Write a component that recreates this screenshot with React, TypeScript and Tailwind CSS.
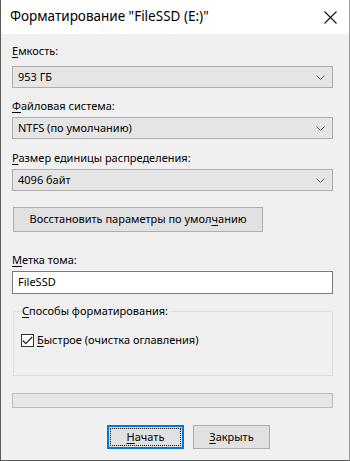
import React from "react";

const font = { fontFamily: '"Noto Sans", "Liberation Sans", sans-serif' };

function U({ children }: { children: React.ReactNode }) {
  return <span className="underline underline-offset-2 decoration-1">{children}</span>;
}

function Chevron() {
  return (
    <svg width="9" height="5" viewBox="0 0 9 5" className="shrink-0">
      <path d="M0.5 0.5 L4.5 4.5 L8.5 0.5" fill="none" stroke="#606060" strokeWidth="1" />
    </svg>
  );
}

function Combo({ value }: { value: string }) {
  return (
    <div className="h-[22px] w-[321px] bg-[#e5e5e5] border border-[#adadad] flex items-center justify-between pl-[5px] pr-[7px] text-[11px] text-black">
      <span>{value}</span>
      <Chevron />
    </div>
  );
}

function Label({ children, className = "" }: { children: React.ReactNode; className?: string }) {
  return <div className={"h-[16px] leading-[16px] text-[11px] text-black " + className}>{children}</div>;
}

export default function App() {
  return (
    <div className="w-[350px] h-[461px] bg-[#f0f0f0] border-l border-b border-r border-l-[#5a5a5a] border-b-[#5a5a5a] border-r-[#9a9a9a] flex flex-col box-border" style={font}>
      <div className="h-[34px] bg-white flex items-center justify-between pl-[9px] pr-[12px] shrink-0">
        <span className="text-[13.5px] text-black leading-none">Форматирование "FileSSD (E:)"</span>
        <svg width="13" height="13" viewBox="0 0 13 13">
          <path d="M0.5 0.5 L12.5 12.5 M12.5 0.5 L0.5 12.5" stroke="#111" strokeWidth="1.1" fill="none" />
        </svg>
      </div>
      <div className="flex flex-col pl-[11px]">
        <Label className="mt-[9px]"><U>Е</U>мкость:</Label>
        <div className="mt-[7px]"><Combo value="953 ГБ" /></div>
        <Label className="mt-[10px]"><U>Ф</U>айловая система:</Label>
        <div className="mt-[3px]"><Combo value="NTFS (по умолчанию)" /></div>
        <Label className="mt-[11px]"><U>Р</U>азмер единицы распределения:</Label>
        <div className="mt-[3px]"><Combo value="4096 байт" /></div>
        <button className="mt-[16px] ml-[1px] h-[25px] w-[250px] bg-[#e1e1e1] border border-[#adadad] text-[11px] text-black flex items-center justify-center">
          <span>Восстановить параметры по умол<U>ч</U>анию</span>
        </button>
        <Label className="mt-[20px]"><U>М</U>етка тома:</Label>
        <div className="mt-[3px] h-[23px] w-[321px] bg-white border border-[#7a7a7a] flex items-center pl-[5px] text-[11px] text-black">
          FileSSD
        </div>
        <div className="mt-[17px] ml-[1px] w-[320px] h-[65px] border border-[#dcdcdc] relative">
          <div className="absolute left-[7px] top-[-9px] bg-[#f0f0f0] px-[1px] h-[16px] leading-[16px] text-[11px] text-black">
            <U>С</U>пособы форматирования:
          </div>
          <div className="flex items-center mt-[20px] ml-[7px] gap-[3px]">
            <div className="w-[13px] h-[13px] bg-white border border-[#333] flex items-center justify-center">
              <svg width="11" height="9" viewBox="0 0 11 9">
                <path d="M0.8 4.5 L3.8 7.6 L10.2 1" fill="none" stroke="#222" strokeWidth="1.2" />
              </svg>
            </div>
            <span className="text-[11px] text-black leading-[16px]"><U>Б</U>ыстрое (очистка оглавления)</span>
          </div>
        </div>
        <div className="mt-[17px] w-[321px] h-[15px] bg-[#e6e6e6] border border-[#bcbcbc]" />
        <div className="mt-[17px] flex gap-[9px] ml-[95px]">
          <button className="w-[77px] h-[24px] bg-[#e1e1e1] border-2 border-[#0078d7] p-[1px] text-[11px] text-black">
            <div className="w-full h-full border border-dotted border-black flex items-center justify-center">
              <span><U>Н</U>ачать</span>
            </div>
          </button>
          <button className="w-[77px] h-[24px] bg-[#e1e1e1] border border-[#adadad] text-[11px] text-black flex items-center justify-center">
            <span><U>З</U>акрыть</span>
          </button>
        </div>
      </div>
    </div>
  );
}
